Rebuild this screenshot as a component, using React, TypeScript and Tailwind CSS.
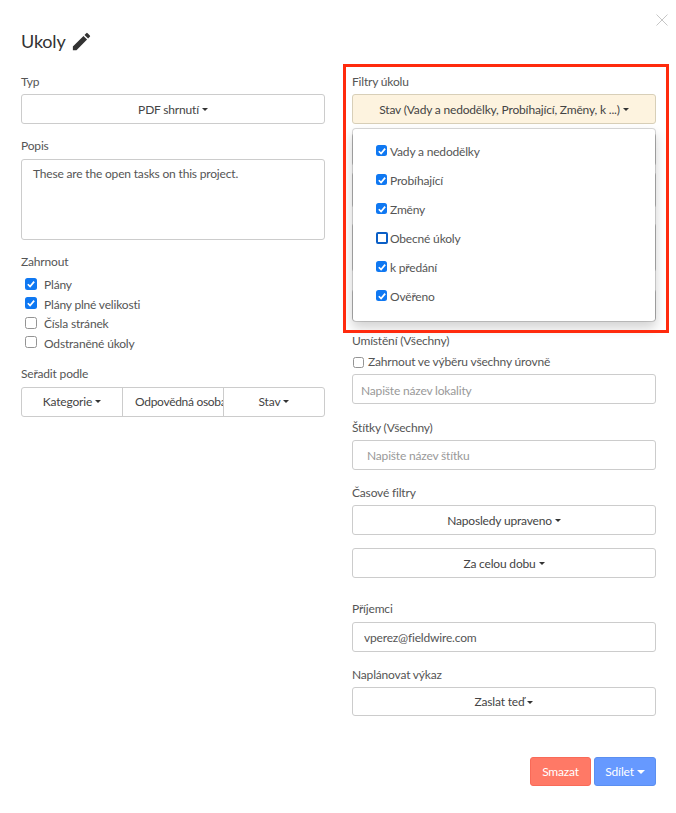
import React from "react";
import { MdEdit } from "react-icons/md";

const Caret = ({ big }: { big?: boolean }) => (
  <span
    className={
      big
        ? "ml-[3px] inline-block h-0 w-0 border-x-[4px] border-t-[4px] border-x-transparent border-t-white align-middle"
        : "ml-[3px] inline-block h-0 w-0 border-x-[3px] border-t-[3px] border-x-transparent border-t-[#333] align-middle"
    }
  />
);

const Label = ({ children, className = "" }: { children: React.ReactNode; className?: string }) => (
  <div className={`h-[14px] text-[12px] leading-[14px] text-[#555] ${className}`}>{children}</div>
);

const Select = ({ children, className = "" }: { children: React.ReactNode; className?: string }) => (
  <button className={`flex h-[30px] w-full items-center justify-center rounded-[3px] border border-[#ccc] pt-px text-[12px] text-[#444] ${className}`}>
    {children}
    <Caret />
  </button>
);

const Check = ({ checked, focus, large }: { checked?: boolean; focus?: boolean; large?: boolean }) =>
  checked ? (
    <span className={`flex shrink-0 items-center justify-center rounded-[2.5px] bg-[#0f78f2] ${large ? "h-[12px] w-[12px]" : "h-[11px] w-[11px]"}`}>
      <svg viewBox="0 0 12 12" className="h-[10px] w-[10px]">
        <path d="M2.2 6.3 L4.9 9 L9.8 3.2" fill="none" stroke="white" strokeWidth="2.1" />
      </svg>
    </span>
  ) : focus ? (
    <span className="h-[12px] w-[12px] shrink-0 rounded-[2px] border-2 border-[#0b5fc6] bg-white" />
  ) : (
    <span className={`shrink-0 rounded-[2.5px] border border-[#949494] bg-white ${large ? "h-[12px] w-[12px]" : "h-[11px] w-[11px]"}`} />
  );

const Row = ({ label, checked }: { label: string; checked?: boolean }) => (
  <div className="flex h-[19.5px] items-center pl-1 text-[12px] text-[#555]">
    <span className="-mt-[3px] flex">
      <Check checked={checked} large />
    </span>
    <span className="ml-[7px]">{label}</span>
  </div>
);

const TextInput = ({ placeholder, value, className = "" }: { placeholder?: string; value?: string; className?: string }) => (
  <input
    readOnly
    placeholder={placeholder}
    value={value ?? ""}
    className={`block h-[30px] w-full rounded-[3px] border border-[#ccc] bg-white text-[12px] text-[#555] outline-none placeholder:text-[#999] ${className}`}
  />
);

const MenuItem = ({ label, checked, focus }: { label: string; checked?: boolean; focus?: boolean }) => (
  <div className="flex h-[29px] items-center pl-[23px] text-[12px] text-[#555]">
    <span className="-mt-[2px] flex w-[14px] shrink-0">
      <Check checked={checked} focus={focus} />
    </span>
    <span>{label}</span>
  </div>
);

export default function App() {
  return (
    <div className="relative h-[813px] w-[676px] overflow-hidden bg-white pt-[27px] font-['Lato','Noto_Sans',sans-serif] tracking-[-0.18px]">
      <svg viewBox="0 0 12 12" className="absolute left-[656px] top-[14px] h-[12px] w-[12px]">
        <path d="M0.5 0.5 L11.5 11.5 M11.5 0.5 L0.5 11.5" stroke="#c6c6c6" strokeWidth="1" fill="none" />
      </svg>

      <div className="flex h-[30px] items-center pl-[21px]">
        <span className="-mt-[2px] text-[18px] leading-[30px] text-[#333]">Ukoly</span>
        <MdEdit className="-mt-px ml-[4px] text-[#333]" size={23} />
      </div>

      <div className="mt-[18px] flex gap-[27px] px-[21px]">
        <div className="w-[304px] shrink-0">
          <Label>Typ</Label>
          <Select className="mt-[5px]">PDF shrnutí</Select>

          <Label className="mt-[15px]">Popis</Label>
          <textarea
            readOnly
            value="These are the open tasks on this project."
            className="mt-[6px] block h-[81px] w-full resize-none rounded-[3px] border border-[#ccc] bg-white px-[11px] py-[5px] text-[12px] leading-[18px] text-[#555] outline-none"
          />

          <Label className="mt-[15px]">Zahrnout</Label>
          <div className="mt-[6.5px]">
            <Row label="Plány" checked />
            <Row label="Plány plné velikosti" checked />
            <Row label="Čísla stránek" />
            <Row label="Odstraněné úkoly" />
          </div>

          <Label className="mt-[13px]">Seřadit podle</Label>
          <div className="mt-[6px] flex h-[30px] rounded-[3px] border border-[#ccc] text-[12px] text-[#444]">
            <div className="flex w-[100px] items-center justify-center">
              Kategorie
              <Caret />
            </div>
            <div className="flex w-[102px] items-center overflow-hidden whitespace-nowrap border-x border-[#ccc] pl-3 tracking-[-0.3px]">
              Odpovědná osoba
              <Caret />
            </div>
            <div className="flex flex-1 items-center justify-center">
              Stav
              <Caret />
            </div>
          </div>
        </div>

        <div className="relative w-[304px] shrink-0">
          <Label>Filtry úkolu</Label>
          <Select className="mt-[5px] border-[#d8cfb8] bg-[#fdf3df]">Stav (Vady a nedodělky, Probíhající, Změny, k ...)</Select>

          <div className="mt-[9px] h-[33px] rounded-[3px] border border-[#ccc]" />
          <div className="mt-[6px] h-[36px] rounded-[3px] border border-[#ccc]" />
          <div className="mt-[15px] h-[49px] rounded-[3px] border border-[#ccc]" />
          <div className="mt-[17px] h-[32px] rounded-[3px] border border-[#ccc]" />

          <Label className="mt-[13px]">Umístění (Všechny)</Label>
          <div className="mt-[7px] flex h-[14px] items-center pl-px text-[12px] text-[#555]">
            <Check />
            <span className="ml-[4px]">Zahrnout ve výběru všechny úrovně</span>
          </div>
          <TextInput className="mt-[5px] pl-2 pt-[2px]" placeholder="Napište název lokality" />

          <Label className="mt-[17px]">Štítky (Všechny)</Label>
          <TextInput className="mt-[5px] pl-[14px]" placeholder="Napište název štítku" />

          <Label className="mt-[16px]">Časové filtry</Label>
          <Select className="mt-[5px]">Naposledy upraveno</Select>
          <Select className="mt-[13px]">Za celou dobu</Select>

          <Label className="mt-[24px]">Příjemci</Label>
          <TextInput className="mt-[6px] pl-[11px]" value="vperez@fieldwire.com" />

          <Label className="mt-[16px]">Naplánovat výkaz</Label>
          <Select className="mt-[5px] !h-[29px]">Zaslat teď</Select>

          <div className="mt-[41px] flex justify-end gap-[3px] text-[12px] text-white">
            <button className="h-[29px] w-[61px] rounded-[3px] border border-[#f96a58] bg-[#ff7966]">Smazat</button>
            <button className="flex h-[29px] w-[62px] items-center justify-center rounded-[3px] border border-[#5b8ff0] bg-[#6699ff]">
              Sdílet
              <Caret big />
            </button>
          </div>

          <div className="absolute left-0 top-[53px] h-[194px] w-full rounded-[4px] border border-[rgba(0,0,0,0.15)] bg-white bg-clip-padding py-2 shadow-[0_6px_12px_rgba(0,0,0,0.175)]">
            <MenuItem label="Vady a nedodělky" checked />
            <MenuItem label="Probíhající" checked />
            <MenuItem label="Změny" checked />
            <MenuItem label="Obecné úkoly" focus />
            <MenuItem label="k předání" checked />
            <MenuItem label="Ověřeno" checked />
          </div>
        </div>
      </div>

      <div className="pointer-events-none absolute left-[343px] top-[64px] h-[269px] w-[326px] border-[3px] border-[#ff2a0d]" />
    </div>
  );
}
